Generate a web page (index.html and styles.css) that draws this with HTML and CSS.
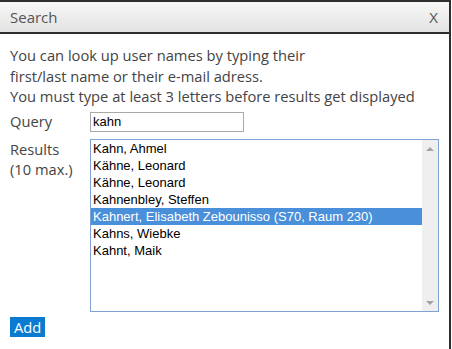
FILE: index.html
```html
<!DOCTYPE html>
<html>
<head>
<meta charset="utf-8">
<link rel="stylesheet" href="styles.css">
</head>
<body>
<div class="dialog">
  <div class="titlebar">
    <span class="title">Search</span>
    <span class="close">X</span>
  </div>
  <div class="content">
    <p class="intro">You can look up user names by typing their<br>first/last name or their e-mail adress.<br>You must type at least 3 letters before results get displayed</p>
    <div class="row query-row">
      <label class="label">Query</label>
      <div class="input">kahn</div>
    </div>
    <div class="row results-row">
      <div class="label">Results<br>(10 max.)</div>
      <div class="listbox">
        <ul class="items">
          <li>Kahn, Ahmel</li>
          <li>Kähne, Leonard</li>
          <li>Kähne, Leonard</li>
          <li>Kahnenbley, Steffen</li>
          <li class="selected">Kahnert, Elisabeth Zebounisso (S70, Raum 230)</li>
          <li>Kahns, Wiebke</li>
          <li>Kahnt, Maik</li>
        </ul>
        <div class="scrollbar">
          <span class="arrow up"></span>
          <span class="arrow down"></span>
        </div>
      </div>
    </div>
    <button class="add">Add</button>
  </div>
</div>
</body>
</html>
```
FILE: styles.css
```css
html, body {
  margin: 0;
  padding: 0;
  background: #fff;
}
.dialog {
  width: 449px;
  height: 347px;
  border-top: 2px solid #2e2e2e;
  border-right: 2px solid #2e2e2e;
  font-family: "Open Sans", "Noto Sans", sans-serif;
  color: #444;
  display: flex;
  flex-direction: column;
}
.titlebar {
  height: 30px;
  border-bottom: 2px solid #2e2e2e;
  background: linear-gradient(#f7f7f7, #e3e3e3);
  display: flex;
  align-items: center;
  justify-content: space-between;
  padding: 0 11px 0 10px;
  font-size: 15px;
  color: #555;
}
.content {
  padding: 11px 10px 0 10px;
  font-size: 14.7px;
}
.intro {
  margin: 0 0 5px 0;
  line-height: 20.5px;
}
.row {
  display: flex;
}
.label {
  width: 80px;
  flex: none;
  line-height: 20.5px;
}
.query-row {
  align-items: center;
  height: 20px;
  margin-bottom: 7px;
}
.input {
  width: 148px;
  height: 18px;
  border: 1px solid #a9a9a9;
  padding: 0 2px;
  font-family: "Liberation Sans", Arial, sans-serif;
  font-size: 13px;
  color: #000;
  line-height: 18px;
}
.results-row .label {
  padding-top: 0;
}
.listbox {
  width: 350px;
  height: 171px;
  border: 1px solid #7fa2d1;
  display: flex;
}
.items {
  list-style: none;
  margin: 0;
  padding: 0;
  flex: 1;
  font-family: "Liberation Sans", Arial, sans-serif;
  font-size: 13px;
  color: #000;
}
.items li {
  height: 17px;
  line-height: 17px;
  padding-left: 2px;
}
.items li.selected {
  background: #4a8fd9;
  color: #fff;
}
.scrollbar {
  width: 16px;
  background: #efefef;
  display: flex;
  flex-direction: column;
  justify-content: space-between;
  align-items: center;
  padding: 7px 0 6px;
  box-sizing: border-box;
}
.arrow {
  width: 0;
  height: 0;
  border-left: 4px solid transparent;
  border-right: 4px solid transparent;
}
.arrow.up {
  border-bottom: 4px solid #a3a3a3;
}
.arrow.down {
  border-top: 4px solid #a3a3a3;
}
.add {
  margin-top: 5px;
  background: #0a7bd1;
  color: #fff;
  border: none;
  padding: 0 4px;
  height: 20px;
  font-family: "Open Sans", "Noto Sans", sans-serif;
  font-size: 14.7px;
  line-height: 20px;
  cursor: pointer;
}
```
